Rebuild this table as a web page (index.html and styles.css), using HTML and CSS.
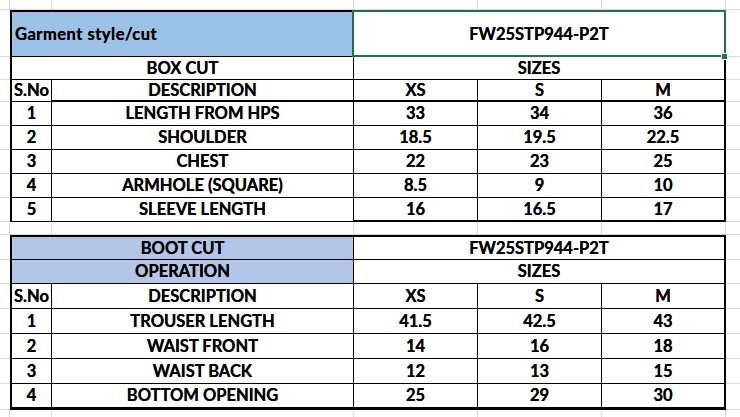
FILE: index.html
```html
<!DOCTYPE html>
<html>
<head>
<meta charset="utf-8">
<link rel="stylesheet" href="styles.css">
</head>
<body>
<div class="sheet">
  <!-- row 0 -->
  <div class="g"></div><div class="g"></div><div class="g"></div><div class="g"></div><div class="g"></div><div class="g"></div><div class="g end"></div>

  <!-- table 1 header -->
  <div class="m"></div>
  <div class="t span2 blue1 top2 left2 lefttext">Garment style/cut</div>
  <div class="t span3 top2 right2 selected">FW25STP944-P2T</div>
  <div class="m end"></div>

  <div class="m"></div>
  <div class="t span2 left2">BOX CUT</div>
  <div class="t span3 right2">SIZES</div>
  <div class="m end"></div>

  <div class="m"></div>
  <div class="t left2">S.No</div>
  <div class="t bot2">DESCRIPTION</div>
  <div class="t bot2">XS</div>
  <div class="t bot2">S</div>
  <div class="t bot2 right2">M</div>
  <div class="m end"></div>

  <div class="m"></div><div class="t left2">1</div><div class="t">LENGTH FROM HPS</div><div class="t">33</div><div class="t">34</div><div class="t right2">36</div><div class="m end"></div>
  <div class="m"></div><div class="t left2">2</div><div class="t">SHOULDER</div><div class="t">18.5</div><div class="t">19.5</div><div class="t right2">22.5</div><div class="m end"></div>
  <div class="m"></div><div class="t left2">3</div><div class="t">CHEST</div><div class="t">22</div><div class="t">23</div><div class="t right2">25</div><div class="m end"></div>
  <div class="m"></div><div class="t left2">4</div><div class="t">ARMHOLE (SQUARE)</div><div class="t">8.5</div><div class="t">9</div><div class="t right2">10</div><div class="m end"></div>
  <div class="m"></div><div class="t left2">5</div><div class="t">SLEEVE LENGTH</div><div class="t bot2">16</div><div class="t bot2">16.5</div><div class="t bot2 right2">17</div><div class="m end"></div>

  <!-- gap row -->
  <div class="g"></div><div class="g"></div><div class="g"></div><div class="g"></div><div class="g"></div><div class="g"></div><div class="g end"></div>

  <!-- table 2 -->
  <div class="m"></div>
  <div class="t span2 blue2 top2 left2">BOOT CUT</div>
  <div class="t span3 top2 right2">FW25STP944-P2T</div>
  <div class="m end"></div>

  <div class="m"></div>
  <div class="t span2 blue2 left2">OPERATION</div>
  <div class="t span3 right2">SIZES</div>
  <div class="m end"></div>

  <div class="m"></div>
  <div class="t left2">S.No</div>
  <div class="t">DESCRIPTION</div>
  <div class="t">XS</div>
  <div class="t">S</div>
  <div class="t right2">M</div>
  <div class="m end"></div>

  <div class="m"></div><div class="t left2">1</div><div class="t">TROUSER LENGTH</div><div class="t">41.5</div><div class="t">42.5</div><div class="t right2">43</div><div class="m end"></div>
  <div class="m"></div><div class="t left2">2</div><div class="t">WAIST FRONT</div><div class="t">14</div><div class="t">16</div><div class="t right2">18</div><div class="m end"></div>
  <div class="m"></div><div class="t left2">3</div><div class="t">WAIST BACK</div><div class="t">12</div><div class="t">13</div><div class="t right2">15</div><div class="m end"></div>
  <div class="m"></div><div class="t left2 bot3">4</div><div class="t bot3">BOTTOM OPENING</div><div class="t bot3">25</div><div class="t bot3">29</div><div class="t bot3 right2">30</div><div class="m end"></div>

  <!-- last row -->
  <div class="g nb"></div><div class="g nb"></div><div class="g nb"></div><div class="g nb"></div><div class="g nb"></div><div class="g nb"></div><div class="g nb end"></div>
</div>
</body>
</html>
```
FILE: styles.css
```css
html, body {
  margin: 0;
  padding: 0;
  background: #ffffff;
}

.sheet {
  width: 740px;
  height: 417px;
  overflow: hidden;
  display: grid;
  grid-template-columns: 10px 42px 302px 124px 124px 124px 14px;
  grid-template-rows: 10px 47px 23px 22px 24px 24px 24px 24px 24px 13px 25px 24px 25px 25px 25px 25px 26px 8px;
  font-family: "Lato", "Liberation Sans", sans-serif;
  font-weight: 700;
  font-size: 16.5px;
  color: #000;
}

.sheet > div {
  box-sizing: border-box;
  min-width: 0;
  min-height: 0;
}

/* empty gridline cells */
.g {
  border-right: 1px solid #d9d9d9;
  border-bottom: 1px solid #d9d9d9;
}
.g.nb { border-bottom: none; }
.g.end { border-right: none; }

/* margin cells next to tables */
.m {
  border-bottom: 1px solid #d9d9d9;
}

/* table cells */
.t {
  border-right: 1px solid #000;
  border-bottom: 1px solid #000;
  display: flex;
  align-items: center;
  justify-content: center;
  white-space: nowrap;
  line-height: 1.2;
  padding-top: 1px;
  text-shadow: 0 0 0.3px #000;
}

.span2 { grid-column: span 2; }
.span3 { grid-column: span 3; }

.top2 { border-top: 2px solid #000; }
.left2 { border-left: 2px solid #000; }
.right2 { border-right: 2px solid #000; }
.bot2 { border-bottom: 2px solid #000; }
.bot3 { border-bottom: 3px solid #000; }

.lefttext {
  justify-content: flex-start;
  padding-left: 3px;
  letter-spacing: 0.5px;
}

.blue1 { background: #9bc2e6; }
.blue2 { background: #b4c6e7; }

.selected {
  position: relative;
}
.selected::after {
  content: "";
  position: absolute;
  top: -2px;
  left: -2px;
  right: -2px;
  bottom: -1px;
  border: 2px solid #217346;
  pointer-events: none;
}
.selected::before {
  content: "";
  position: absolute;
  right: -4px;
  bottom: -4px;
  width: 5px;
  height: 5px;
  background: #217346;
  border: 1px solid #fff;
  z-index: 2;
}
```
